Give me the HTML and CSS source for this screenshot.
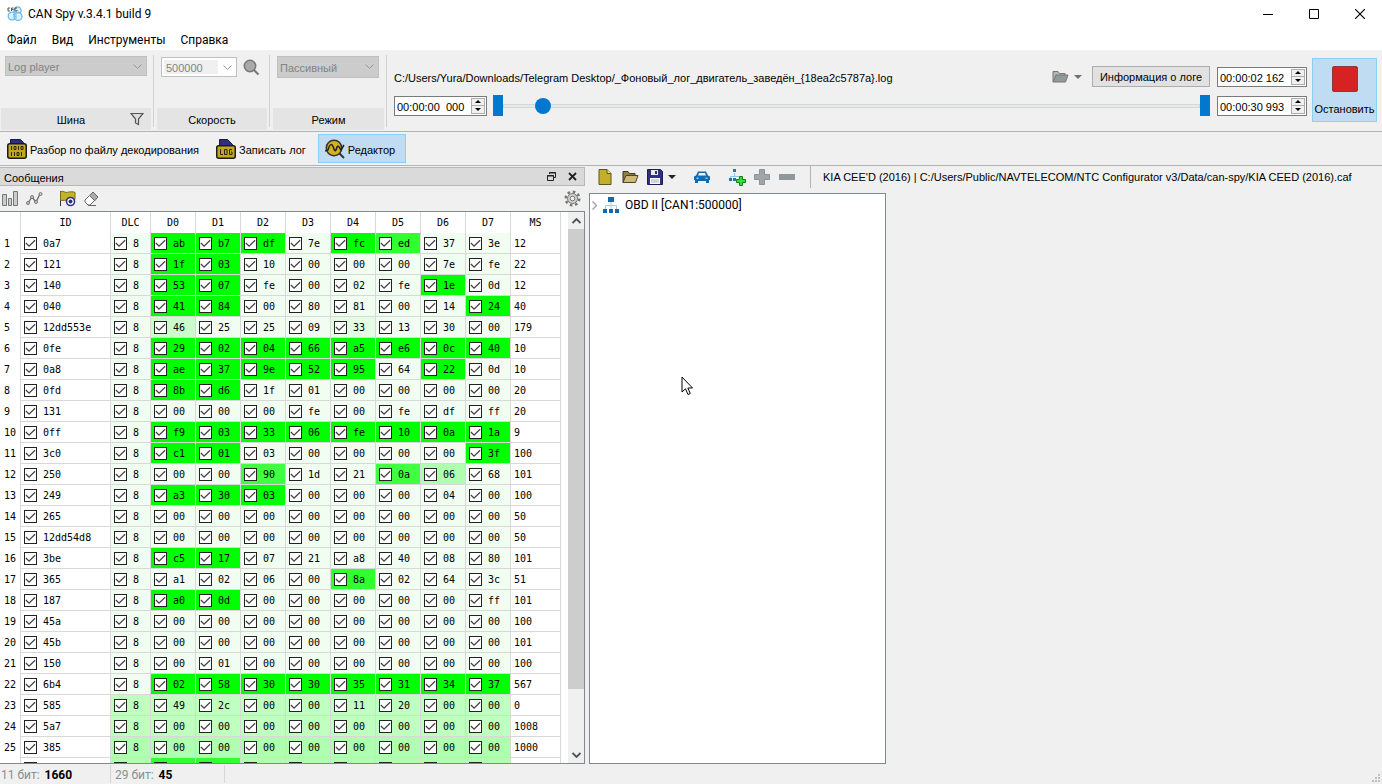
FILE: index.html
```html
<!DOCTYPE html>
<html lang="ru">
<head>
  <meta charset="UTF-8" />
  <title>CAN Spy v.3.4.1 build 9</title>
  <link rel="stylesheet" href="styles.css">
</head>
<body>

  <header class="titlebar">
    <svg class="app-logo" width="16" height="16" viewBox="0 0 16 16">
      <g fill="#d9effb" stroke="#6bb8e6" stroke-width="1.3">
        <circle cx="10.5" cy="4.5" r="3.6"/>
        <circle cx="5" cy="10" r="3.8"/>
        <circle cx="11" cy="10.500" r="4"/>
      </g>
      <path d="M6 8l3 3M9 8v5" stroke="#6bb8e6" fill="none"/>
      <path d="M3 2H1v3h2M4.500 5V2h2M4.500 3.500h2M10 2H8v3h2V4" stroke="#555" fill="none"/>
    </svg>
    <h1>CAN Spy v.3.4.1 build 9</h1>
    <div class="window-buttons">
      <button aria-label="Свернуть"><svg width="10" height="10"><path d="M0 5.5h10" stroke="#000"/></svg></button>
      <button aria-label="Развернуть"><svg width="10" height="10"><path d="M.5.5h9v9h-9z" stroke="#000" fill="none"/></svg></button>
      <button aria-label="Закрыть"><svg width="10" height="10"><path d="M0 0l10 10M10 0L0 10" stroke="#000" stroke-width="1.2"/></svg></button>
    </div>
  </header>

  <nav class="menu">
    <button>Файл</button>
    <button>Вид</button>
    <button>Инструменты</button>
    <button>Справка</button>
  </nav>

  <section class="ribbon">
    <div class="group group-bus">
      <div class="group-body">
        <div class="combo">
          <select id="bus" disabled><option>Log player</option></select>
          <svg width="9" height="6"><path d="M.5.5l4 4 4-4" stroke="#9a9a9a" fill="none"/></svg>
        </div>
      </div>
      <div class="group-label">
        <label for="bus">Шина</label>
        <button class="filter" aria-label="Фильтр"><svg width="14" height="14" viewBox="0 0 14 14"><path d="M1 1.500h12L8.500 7v5.500l-3-1.500V7z" stroke="#555" fill="#ddd" stroke-width="1.200"/></svg></button>
      </div>
    </div>

    <div class="group group-speed">
      <div class="group-body">
        <div class="combo combo-white">
          <select id="speed" disabled><option>500000</option></select>
          <svg width="9" height="6"><path d="M.5.5l4 4 4-4" stroke="#9a9a9a" fill="none"/></svg>
        </div>
        <button class="search" aria-label="Найти"><svg width="17" height="17" viewBox="0 0 17 17"><circle cx="7" cy="7" r="5.700" fill="#aaa" stroke="#777" stroke-width="1.500"/><path d="M11 11l4.500 4.500" stroke="#777" stroke-width="2"/></svg></button>
      </div>
      <div class="group-label"><label for="speed">Скорость</label></div>
    </div>

    <div class="group">
      <div class="group-body">
        <div class="combo combo-mode">
          <select id="mode" disabled><option>Пассивный</option></select>
          <svg width="9" height="6"><path d="M.5.5l4 4 4-4" stroke="#9a9a9a" fill="none"/></svg>
        </div>
      </div>
      <div class="group-label"><label for="mode">Режим</label></div>
    </div>

    <div class="player">
      <div class="player-row">
        <span class="path">C:/Users/Yura/Downloads/Telegram Desktop/_Фоновый_лог_двигатель_заведён_{18ea2c5787a}.log</span>
        <button class="open-log" aria-label="Открыть лог">
          <svg width="17" height="13" viewBox="0 0 17 13"><path d="M1 12V1.500h5l1.500 2H13V5" fill="#b5b5b0" stroke="#777"/><path d="M1 12L4 5h12l-2.500 7z" fill="#909a9c" stroke="#777"/></svg>
          <svg width="8" height="4"><path d="M0 0h8L4 4z" fill="#707070"/></svg>
        </button>
        <button class="info">Информация о логе</button>
        <div class="spin">
          <input type="text" value="00:00:02 162" aria-label="Текущее время">
          <span class="arrows"><button aria-label="Больше"></button><button class="down" aria-label="Меньше"></button></span>
        </div>
      </div>
      <div class="player-row">
        <div class="spin">
          <input type="text" value="00:00:00  000" aria-label="Начало">
          <span class="arrows"><button aria-label="Больше"></button><button class="down" aria-label="Меньше"></button></span>
        </div>
        <div class="track">
          <span class="limit"></span>
          <input type="range" min="0" max="1000" value="46" aria-label="Позиция">
          <span class="limit"></span>
        </div>
        <div class="spin">
          <input type="text" value="00:00:30 993" aria-label="Конец">
          <span class="arrows"><button aria-label="Больше"></button><button class="down" aria-label="Меньше"></button></span>
        </div>
      </div>
    </div>

    <button class="stop">
      <svg width="26" height="26"><rect x=".5" y=".5" width="25" height="25" rx="1.500" fill="#d62222" stroke="#8a3a3a"/></svg>
      Остановить
    </button>
  </section>

  <section class="modes">
    <button>
      <svg width="20" height="21" viewBox="0 0 20 21"><path d="M3.500 6V1.500h10l3 3V6" fill="#2e2e80" stroke="#1c1c1c"/><rect x=".75" y="5.750" width="18.500" height="14.500" rx="2" fill="#c2a81e" stroke="#1c1c1c" stroke-width="1.500"/><path d="M4.500 8v4M7 8.500h2v3H7zM11.500 8v4M14 8.500h2v3h-2zM4.500 14v4M7.500 14v4M10 14.500h2v3h-2zM14.500 14v4" stroke="#2a2410" fill="none"/></svg>
      <span>Разбор по файлу декодирования</span>
    </button>
    <button>
      <svg width="20" height="21" viewBox="0 0 20 21"><path d="M3.500 8V1.500h8l5 5V8" fill="#2e2e80" stroke="#1c1c1c"/><rect x=".75" y="7.750" width="18.500" height="12.500" rx="2" fill="#c2a81e" stroke="#1c1c1c" stroke-width="1.500"/><path d="M4.500 11v5.500H7M8.500 11.500h2.500v5H8.500zM16 11.500h-2.500v5H16V14h-1" stroke="#2a2410" fill="none"/></svg>
      <span>Записать лог</span>
    </button>
    <button class="active">
      <svg width="20" height="20" viewBox="0 0 20 20"><circle cx="9" cy="9" r="7.700" fill="#d3b21d" stroke="#333" stroke-width="1.600"/><path d="M0 12l3-1C5 4 7 4 9 10c1 3 2 2 3-2 1-2 2 0 4 3l3-5" fill="none" stroke="#222" stroke-width="1.500"/><path d="M14.500 14.500L19 19" stroke="#333" stroke-width="2"/></svg>
      <span>Редактор</span>
    </button>
  </section>

  <main>
    <section class="dock">
      <div class="dock-title">
        <h2>Сообщения</h2>
        <button aria-label="Открепить"><svg width="9" height="9"><path d="M2.500 2V.5h6v5H7" stroke="#222" fill="none"/><path d="M2 1h7" stroke="#222"/><path d="M.5 3.500h6v5h-6zM0 4h7" stroke="#222" fill="none"/></svg></button>
        <button aria-label="Закрыть панель"><svg width="9" height="9"><path d="M1 1l7 7M8 1L1 8" stroke="#222" stroke-width="1.800"/></svg></button>
      </div>
      <div class="dock-tools">
        <button aria-label="Столбцы"><svg width="16" height="16"><path d="M.5 3.500h4v11h-4zM6.500 7.500h3v7h-3zM11.500.5h4v14h-4z" fill="#c9cdcd" stroke="#777"/></svg></button>
        <button aria-label="График"><svg width="17" height="16"><path d="M2 12l4-6 4 5 4-8" fill="none" stroke="#666" stroke-width="1.300"/><g fill="#ccc" stroke="#777"><circle cx="2" cy="12" r="1.500"/><circle cx="6" cy="6" r="1.500"/><circle cx="10" cy="11" r="1.500"/><circle cx="14.500" cy="3" r="1.500"/></g></svg></button>
        <button class="flag" aria-label="Пометить"><svg width="17" height="17"><path d="M1.500 1v15" stroke="#333"/><path d="M1.500 1.500c3-1 4 1.500 7 .8 2.500-.6 5-.8 7.500 0v7c-5-1-9 2-14.500 1z" fill="#c2b426" stroke="#77701e"/><circle cx="11.500" cy="11.500" r="4.800" fill="#30308a"/><circle cx="11.500" cy="11.500" r="2.600" fill="none" stroke="#fff" stroke-width="1.200"/></svg></button>
        <button aria-label="Очистить"><svg width="16" height="16"><path d="M5.500 4.500L9 1l5 5-3.500 4z" fill="#a9acac" stroke="#666"/><path d="M5.500 4.500L10.500 9.500 6 14H4L1 11V9z" fill="#fff" stroke="#666"/><path d="M4 14.500h8" stroke="#666"/></svg></button>
        <button class="gear" aria-label="Настройки"><svg width="17" height="17" viewBox="0 0 17 17"><circle cx="8.500" cy="8.500" r="6.800" fill="none" stroke="#777" stroke-width="2.400" stroke-dasharray="2.670 2.670"/><circle cx="8.500" cy="8.500" r="5" fill="#d0d0cc" stroke="#777"/><circle cx="8.500" cy="8.500" r="2.300" fill="#f0f0f0" stroke="#777"/></svg></button>
      </div>
      <div class="grid">
        <div class="grid-view">
          <table>
            <thead>
              <tr><th class="num"></th><th class="id">ID</th><th class="dlc">DLC</th><th>D0</th><th>D1</th><th>D2</th><th>D3</th><th>D4</th><th>D5</th><th>D6</th><th>D7</th><th class="ms">MS</th></tr>
            </thead>
            <tbody id="rows"></tbody>
          </table>
        </div>
        <div class="scroll">
          <button aria-label="Вверх"><svg width="9" height="6"><path d="M.5 5l4-4 4 4" stroke="#505050" stroke-width="1.800" fill="none"/></svg></button>
          <span class="scroll-track"><span class="scroll-thumb"></span></span>
          <button aria-label="Вниз"><svg width="9" height="6"><path d="M.5 1l4 4 4-4" stroke="#505050" stroke-width="1.800" fill="none"/></svg></button>
        </div>
      </div>
    </section>

    <section class="editor">
      <div class="editor-tools">
        <button aria-label="Новый"><svg width="14" height="16"><path d="M1 .5h8l4 4v11H1z" fill="#c3b02a" stroke="#5c5520"/><path d="M9 .5v4h4" fill="#e8dc80" stroke="#5c5520"/></svg></button>
        <button class="folder" aria-label="Открыть"><svg width="17" height="14"><path d="M1 12.500V1.500h5l1.500 2H13V5" fill="#8f8040" stroke="#3a3524"/><path d="M1 12.500L4 5.500h12l-2.500 7z" fill="#cdb877" stroke="#4a432a"/></svg></button>
        <button aria-label="Сохранить"><svg width="16" height="16"><path d="M.5.5h13l2 2v13H.5z" fill="#30307e" stroke="#1e1e50"/><path d="M4 1h7v5H4z" fill="#e8e8f4"/><path d="M8 2h2v3H8z" fill="#30307e"/><path d="M3 9h10v6H3z" fill="#fff"/><path d="M4 11h8M4 13h8" stroke="#aaa"/></svg></button>
        <button class="more" aria-label="Ещё"><svg width="8" height="4"><path d="M0 0h8L4 4z" fill="#222"/></svg></button>
        <button class="car" aria-label="Автомобиль"><svg width="16" height="12"><path d="M2 4.500L4 .5h8l2 4 2 1V9h-1v3h-3v-2H4v2H1V9H0V5.500z" fill="#0f6ab4"/><path d="M4 4.500L5 2h6l1 2.500z" fill="#e8f0f8"/><path d="M2.500 6.500h2V8h-2zM11.500 6.500h2V8h-2z" fill="#9cc8ea"/></svg></button>
        <button class="node" aria-label="Добавить узел"><svg width="17" height="17"><path d="M5.500 4v3M1.500 10V7.500h9V9" stroke="#8ec4e6" fill="none"/><path d="M4 0h3v3H4zM0 9h3v3H0zM4 9h3v3H4z" fill="#1a76bc"/><path d="M10.500 7.500h3v3h3v3h-3v3h-3v-3h-3v-3h3z" fill="#35e035" stroke="#1a7a1a"/></svg></button>
        <button class="plus" aria-label="Добавить"><svg width="16" height="16"><path d="M5.500.5h5v5h5v5h-5v5h-5v-5h-5v-5h5z" fill="#a0a5a8" stroke="#8c9296"/></svg></button>
        <button aria-label="Удалить"><svg width="16" height="6"><path d="M0 0h16v6H0z" fill="#8e989d"/></svg></button>
        <span class="file">KIA CEE'D (2016) | C:/Users/Public/NAVTELECOM/NTC Configurator v3/Data/can-spy/KIA CEED (2016).caf</span>
      </div>
      <div class="tree">
        <button class="node-row">
          <svg width="5" height="9"><path d="M.5.5l4 4-4 4" stroke="#a6a6a6" stroke-width="1.500" fill="none"/></svg>
          <svg width="16" height="16"><path d="M8 5v3M2.500 12V8.500h11V12M8 8v4" stroke="#9fd0ec" fill="none"/><path d="M5 0h6v5H5zM0 12h4v4H0zM6 12h4v4H6zM12 12h4v4h-4z" fill="#0f6ab4"/></svg>
          OBD II [CAN1:500000]
        </button>
        <svg class="cursor" width="13" height="20" viewBox="0 0 13 20"><path d="M1 1v15l3.500-3.200L7 18.500l2.300-1L6.800 12H11.500z" fill="#fff" stroke="#000"/></svg>
      </div>
    </section>
  </main>

  <footer class="status">
    <span class="cell">11 бит: <b>1660</b></span>
    <span class="cell">29 бит: <b>45</b></span>
    <svg class="grip" width="8" height="8"><path d="M6 0h2v2H6zM3 3h2v2H3zM6 3h2v2H6zM0 6h2v2H0zM3 6h2v2H3zM6 6h2v2H6z" fill="#c0c0c0"/></svg>
  </footer>

  <script src="script.js"></script>
</body>
</html>
```

FILE: styles.css
```css
* {
  box-sizing: border-box;
}

body {
  font-family: 'Liberation Sans', Arial, sans-serif;
  font-size: 11px;
  line-height: 16px;
  margin: 0;
  height: 100vh;
  display: flex;
  flex-direction: column;
  overflow: hidden;
  background: #f0f0f0;
  color: #000;
}

button, input, select {
  font: inherit;
  color: inherit;
  margin: 0;
  padding: 0;
  border: none;
  border-radius: 0;
  background: none;
}

svg {
  display: block;
  flex: none;
}

.titlebar, .menu, .node-row, .status {
  font-family: Roboto, sans-serif;
  font-size: 12px;
}

/* title and menu */

.titlebar {
  height: 28px;
  background: #fff;
  display: flex;
  align-items: center;
  padding-left: 7px;
}

.titlebar h1 {
  font-size: 12px;
  font-weight: normal;
  margin: 0 auto 0 5px;
}

.window-buttons {
  display: flex;
}

.window-buttons button {
  width: 46px;
  height: 28px;
  padding-left: 2px;
}

.window-buttons svg {
  margin: auto;
}

.menu {
  height: 23px;
  background: #fff;
  border-bottom: 1px solid #f3f3f3;
  display: flex;
  gap: 15px;
  padding: 2px 0 0 7px;
}

/* ribbon */

.ribbon {
  height: 81px;
  display: flex;
  border-bottom: 1px solid #b4b4b4;
}

.group {
  width: 117px;
  display: flex;
  flex-direction: column;
  justify-content: space-between;
  padding: 5px 2px 1px 3px;
  position: relative;
}

.group::after {
  content: "";
  width: 1px;
  background: #d0d0d0;
  position: absolute;
  right: 0;
  top: 4px;
  bottom: 4px;
}

.group-bus {
  width: 154px;
  padding-left: 1px;
}

.group-speed {
  width: 116px;
}

.group-body {
  display: flex;
  gap: 6px;
  padding-left: 4px;
}

.group-speed .group-body {
  padding-top: 1px;
}

.group-label {
  height: 22px;
  margin-right: 1px;
  background: #e4e4e4;
  display: flex;
  align-items: center;
  justify-content: center;
  padding-top: 2px;
  position: relative;
}

.group-bus .group-label {
  padding-right: 10px;
}

.filter {
  position: absolute;
  right: 7px;
  top: 4px;
}

.combo {
  width: 142px;
  height: 20px;
  background: #cccccc;
  border: 1px solid #bfbfbf;
  position: relative;
}

.combo select {
  appearance: none;
  width: 100%;
  height: 100%;
  padding: 1px 0 0 2px;
  color: #838383;
  opacity: 1;
}

.combo svg {
  position: absolute;
  right: 4px;
  top: 7px;
}

.combo-white {
  width: 76px;
  background: #fff;
}

.combo-white select {
  width: 54px;
  height: 14px;
  margin: 2px;
  background: #f0f0f0;
  display: block;
  line-height: 14px;
}

.combo-mode {
  width: 102px;
  height: 22px;
}

.player {
  flex: 1;
  display: flex;
  flex-direction: column;
  gap: 8px;
  padding: 15px 5px 0 7px;
}

.player-row {
  display: flex;
  align-items: center;
  height: 21px;
}

.path {
  margin-right: auto;
  padding-top: 2px;
  white-space: nowrap;
}

.open-log {
  display: flex;
  align-items: center;
  gap: 5px;
  margin-right: 10px;
}

.info {
  width: 118px;
  height: 21px;
  margin-right: 7px;
  padding-top: 1px;
  background: #e1e1e1;
  border: 1px solid #adadad;
}

.spin {
  height: 20px;
  width: 90px;
  background: #fff;
  border: 1px solid #7a7a7a;
  display: flex;
}

.spin:first-child {
  width: 93px;
}

.spin input {
  flex: 1;
  min-width: 0;
  padding: 2px 0 0 2px;
}

.arrows {
  width: 14px;
  margin: 1px;
  display: flex;
  flex-direction: column;
}

.arrows button {
  flex: 1;
  border: 1px solid #adadad;
  background: #f0f0f0;
  display: flex;
}

.arrows .down {
  border-top: none;
}

.arrows button::before {
  content: "";
  margin: auto;
  border: 3px solid transparent;
  border-top: none;
  border-bottom-color: #000;
}

.arrows .down::before {
  border: 3px solid transparent;
  border-bottom: none;
  border-top-color: #000;
}

.track {
  flex: 1;
  display: flex;
  margin: 0 7px 0 6px;
}

.limit {
  width: 10px;
  height: 21px;
  background: #0078d0;
}

.track input {
  appearance: none;
  flex: 1;
  height: 21px;
}

.track input::-webkit-slider-runnable-track {
  height: 4px;
  border: 1px solid #d6d6d6;
  background: #e7eaea;
}

.track input::-webkit-slider-thumb {
  appearance: none;
  width: 16px;
  height: 16px;
  margin-top: -7px;
  border-radius: 50%;
  background: #0078d0;
}

.stop {
  width: 65px;
  height: 64px;
  margin: 7px 5px 0 0;
  padding-top: 3px;
  background: #bfdcf2;
  border: 1px solid #8ad0f4;
  white-space: nowrap;
  display: flex;
  flex-direction: column;
  align-items: center;
  justify-content: center;
  gap: 9px;
}

/* mode buttons */

.modes {
  height: 34px;
  display: flex;
  align-items: center;
  border-bottom: 1px solid #b4b4b4;
}

.modes button {
  height: 29px;
  padding: 0 10px 0 7px;
  display: flex;
  align-items: center;
  gap: 3px;
  white-space: nowrap;
}

.modes span {
  padding-top: 3px;
}

.modes .active {
  background: #bfdcf2;
  border: 1px solid #8ad0f4;
  margin-left: 2px;
  padding-left: 6px;
}

/* message dock */

main {
  flex: 1;
  min-height: 0;
  display: flex;
  gap: 4px;
}

.dock {
  width: 585px;
  display: flex;
  flex-direction: column;
  padding-top: 1px;
}

.dock-title {
  height: 19px;
  background: #dadada;
  border: 1px solid #b8b8b8;
  border-left: none;
  display: flex;
  align-items: center;
  gap: 12px;
  padding: 0 7px 0 4px;
}

.dock-title h2 {
  font-size: 11px;
  font-weight: normal;
  margin: 0 auto 0 0;
  padding-top: 2px;
}

.dock-tools {
  height: 25px;
  display: flex;
  align-items: center;
  gap: 8px;
  padding: 0 4px 0 2px;
}

.dock-tools .flag {
  margin-left: 8px;
}

.dock-tools .gear {
  margin-left: auto;
}

.grid {
  flex: 1;
  min-height: 0;
  display: flex;
  justify-content: space-between;
  background: #fff;
  border: 1px solid #828790;
  border-left: none;
}

.grid-view {
  overflow: hidden;
}

table {
  font-family: 'DejaVu Sans Mono', monospace;
  font-size: 10px;
  line-height: 13px;
  table-layout: fixed;
  width: 561px;
  border-collapse: separate;
  border-spacing: 0;
}

th, td {
  width: 45px;
  height: 21px;
  padding: 1px 0 0 3px;
  font-weight: normal;
  text-align: left;
  border-right: 1px solid #d8d8d8;
  border-bottom: 1px solid #d8d8d8;
}

thead th {
  padding: 0;
  text-align: center;
  border-bottom: none;
}

.num {
  width: 21px;
  padding: 0 0 0 4px;
  border-bottom: none;
}

.id {
  width: 90px;
}

.dlc {
  width: 40px;
}

.ms {
  width: 50px;
}

td label {
  display: flex;
  align-items: center;
  gap: 6px;
}

td input {
  appearance: none;
  width: 13px;
  height: 13px;
  background: #fff;
  border: 1px solid #222;
}

td input:checked::before {
  content: "";
  display: block;
  width: 11px;
  height: 11px;
  background: #444;
  clip-path: polygon(4% 50%, 12% 42%, 37% 66%, 88% 17%, 96% 25%, 37% 82%);
}

.idle { background: #f0fdf0; }
.stale { background: #e4fce4; }
.faint { background: #ccfccc; }
.old { background: #bfffbf; }
.older { background: #b0ffb0; }
.mid { background: #40ff40; }
.recent { background: #30ff30; }
.hot { background: #00ff00; }

.scroll {
  width: 16px;
  background: #f0f0f0;
  display: flex;
  flex-direction: column;
}

.scroll button {
  height: 17px;
}

.scroll svg {
  margin: auto;
}

.scroll-track {
  flex: 1;
}

.scroll-thumb {
  display: block;
  height: 89%;
  background: #cdcdcd;
}

/* editor */

.editor {
  flex: 1;
  min-width: 0;
  display: flex;
  flex-direction: column;
}

.editor-tools {
  height: 27px;
  display: flex;
  align-items: center;
  padding: 0 0 5px 9px;
}

.editor-tools .folder {
  margin: 0 8px 0 10px;
}

.editor-tools .more {
  margin-left: 5px;
}

.editor-tools .car {
  margin-left: 18px;
}

.editor-tools .node {
  margin-left: 19px;
}

.editor-tools .plus {
  margin: 0 9px 0 8px;
}

.file {
  margin-left: 15px;
  padding-left: 12px;
  line-height: 22px;
  border-left: 1px solid #b4b4b4;
  white-space: nowrap;
}

.tree {
  flex: 1;
  width: 297px;
  background: #fff;
  border: 1px solid #828790;
  padding: 2px;
  position: relative;
}

.node-row {
  height: 18px;
  display: flex;
  align-items: center;
  gap: 6px;
}

.cursor {
  position: absolute;
  left: 91px;
  top: 182px;
}

/* status bar */

.status {
  height: 20px;
  display: flex;
  align-items: center;
  color: #87908e;
}

.cell {
  width: 111px;
  padding: 2px 0 0 1px;
  border-right: 1px solid #d6d6d6;
}

.cell + .cell {
  width: 114px;
  padding-left: 4px;
}

.cell b {
  color: #000;
  margin-left: 2px;
}

.grip {
  margin: auto 2px 2px auto;
}
```

FILE: script.js
```js
// id, bytes, period. A mark after a byte sets how fresh the change is
const messages = [
  ["0a7", "ab! b7! df! 7e fc! ed+ 37 3e", 12],
  ["121", "1f! 03! 10 00 00 00 7e fe", 22],
  ["140", "53! 07! fe 00 02 fe 1e! 0d", 12],
  ["040", "41! 84! 00 80 81 00 14 24!", 40],
  ["12dd553e", "46- 25 25 09 33. 13 30 00", 179],
  ["0fe", "29! 02! 04! 66! a5! e6! 0c! 40!", 10],
  ["0a8", "ae! 37! 9e! 52! 95! 64 22! 0d", 10],
  ["0fd", "8b! d6! 1f 01 00 00 00 00", 20],
  ["131", "00 00 00 fe 00 fe df ff", 20],
  ["0ff", "f9! 03! 33! 06! fe! 10! 0a! 1a!", 9],
  ["3c0", "c1! 01! 03 00 00 00 00 3f!", 100],
  ["250", "00 00 90* 1d 21 0a* 06= 68", 101],
  ["249", "a3! 30! 03! 00 00 00 04 00", 100],
  ["265", "00 00 00 00 00 00 00 00", 50],
  ["12dd54d8", "00 00 00 00 00 00 00 00", 50],
  ["3be", "c5! 17! 07 21 a8 40 08 80", 101],
  ["365", "a1 02 06 00 8a+ 02 64 3c", 51],
  ["187", "a0! 0d! 00 00 00 00 00 ff", 101],
  ["45a", "00 00 00 00 00 00 00 00", 100],
  ["45b", "00 00 00 00 00 00 00 00", 101],
  ["150", "00 01 00 00 00 00 00 00", 100],
  ["6b4", "02! 58! 30! 30! 35! 31! 34! 37!", 567],
  ["585", "49 2c 00 00 11 20 00 00", 0, "old"],
  ["5a7", "00 00 00 00 00 00 00 00", 1008, "old"],
  ["385", "00 00 00 00 00 00 00 00", 1000, "older"]
];

const marks = { "!": "hot", "+": "recent", "*": "mid", "=": "older", "-": "faint", ".": "stale" };

function cell(text, name) {
  return `<td class="${name}"><label><input type="checkbox" checked>${text}</label></td>`;
}

const rows = messages.map(([id, bytes, ms, age = "idle"], i) => {
  const data = bytes.split(" ").map(b => cell(b.slice(0, 2), marks[b[2]] || age)).join("");
  return `<tr><th class="num">${i + 1}</th>${cell(id, "")}${cell(8, age)}${data}<td>${ms}</td></tr>`;
});

const ages = ["", "older", "recent", "recent", "older", "older", "older", "older", "older", "older"];
rows.push(`<tr><th class="num"></th>${ages.map(a => cell("", a)).join("")}<td></td></tr>`);

document.getElementById("rows").innerHTML = rows.join("");
```
